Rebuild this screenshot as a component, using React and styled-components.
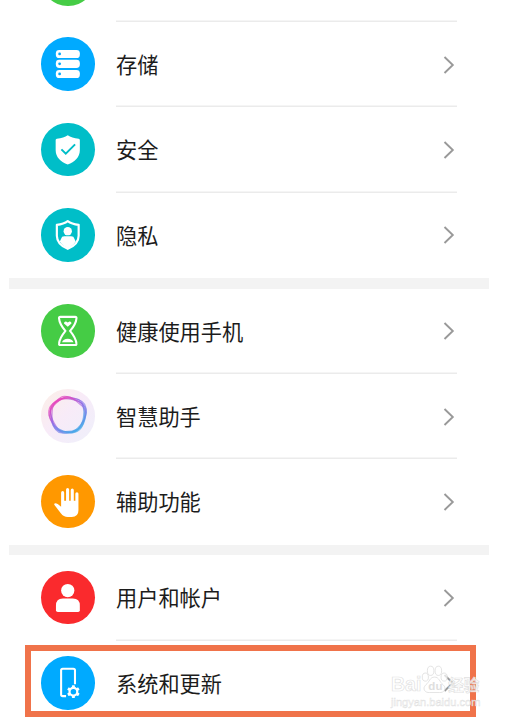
import styled, { createGlobalStyle } from "styled-components";

const GlobalStyle = createGlobalStyle`
    * {
        box-sizing: border-box;
    }
    body {
        margin: 0;
        background: #fff;
        font-family: "Noto Sans CJK SC", sans-serif;
    }
`;

const Screen = styled.main`
    position: relative;
    width: 510px;
    height: 720px;
    overflow: hidden;
    background: #fff;
`;

/* the list is scrolled, so the first row is mostly cut off */
const List = styled.div`
    width: 480px;
    margin: -63.3px 0 0 9px;
`;

const Group = styled.ul`
    list-style: none;
    margin: 0;
    padding: 0 32px;
    & + &::before {
        content: "";
        display: block;
        height: 10.67px;
        margin: 0 -32px;
        background: #f3f3f3;
    }
`;

const Row = styled.li`
    display: flex;
    align-items: center;
    gap: 21.5px;
    height: 85.33px;
`;

const Badge = styled.span`
    flex: none;
    width: 53.5px;
    height: 53.5px;
    margin-bottom: 1px;
    border-radius: 50%;
    background: ${({ $color }) => $color};
    svg {
        display: block;
        width: 100%;
        height: 100%;
    }
`;

const RowBody = styled.div`
    flex: 1;
    height: 100%;
    display: flex;
    align-items: center;
    justify-content: space-between;
    padding-right: 2px;
    box-shadow: ${({ $last }) => ($last ? "none" : "inset 0 -1.5px #ebebeb")};
`;

const Label = styled.span`
    font-size: 21.2px;
    line-height: 30px;
    color: #1c1c1c;
    padding-bottom: 1.6px;
`;

const Highlight = styled.div`
    position: absolute;
    left: 25px;
    top: 645px;
    width: 451px;
    height: 72px;
    border: 6px solid #f0734a;
`;

const Watermark = styled.div`
    position: absolute;
    left: 391px;
    top: 665px;
    width: 92px;
    color: rgba(255, 255, 255, 0.8);
    font-family: "Liberation Sans", "Noto Sans CJK SC", sans-serif;
    -webkit-text-stroke: 0.7px rgba(214, 214, 214, 0.75);
`;

const Brand = styled.div`
    display: flex;
    align-items: flex-end;
    height: 29px;
    font-size: 19.5px;
    line-height: 20px;
    font-weight: bold;
    white-space: nowrap;
`;

const Paw = styled.span`
    position: relative;
    flex: none;
    width: 27px;
    height: 29px;
    svg {
        position: absolute;
        left: 0;
        top: 0;
    }
    span {
        position: absolute;
        left: 7px;
        bottom: 0;
        font-size: 11.5px;
        line-height: 16px;
        color: #dedede;
        -webkit-text-stroke: 0;
    }
`;

const Jingyan = styled.span`
    font-size: 15.5px;
    line-height: 17px;
`;

const Site = styled.div`
    margin-top: 1px;
    font-size: 11.1px;
    line-height: 14px;
    white-space: nowrap;
    -webkit-text-stroke-width: 0.5px;
`;

const Icon = ({ children }) => (
    <svg viewBox="0 0 54 54" fill="none">
        {children}
    </svg>
);

const StorageIcon = () => (
    <Icon>
        {[13, 23, 33.2].map((y) => (
            <g key={y}>
                <rect x="15" y={y} width="24.2" height="8.2" rx="3.4" fill="#fff" />
                <circle cx="18.8" cy={y + 4.1} r="1.4" fill="#00aaff" />
            </g>
        ))}
    </Icon>
);

const SecurityIcon = () => (
    <Icon>
        <path d="M27 12.3Q31 15.2 38 15.8Q39.2 16 39.2 17.2V27.5C39.2 34.5 34 39.5 27 41.8C20 39.5 14.8 34.5 14.8 27.5V17.2Q14.8 16 16 15.8Q23 15.2 27 12.3Z" fill="#fff" />
        <path d="M20.6 26.6L25 31L34.4 21.6" stroke="#00bec8" strokeWidth="2" />
    </Icon>
);

const PrivacyIcon = () => (
    <Icon>
        <path d="M27 13.2Q31 16.2 38 17V28C38 34.5 33.5 38.5 27 41.2C20.5 38.5 16 34.5 16 28V17Q23 16.2 27 13.2Z" stroke="#fff" strokeWidth="2.2" strokeLinejoin="round" />
        <circle cx="27" cy="23.4" r="4.2" fill="#fff" />
        <path d="M19 33.8L20.3 31Q20.8 28.6 23.5 28.6H30.5Q33.2 28.6 33.7 31L35 33.8Q32.5 38 27 40.5Q21.5 38 19 33.8Z" fill="#fff" />
    </Icon>
);

const HourglassIcon = () => (
    <Icon>
        <path d="M19.5 13H34.5Q36 13 35.8 14.5C35.4 20 32.5 23.5 29.4 27.2C32.5 31 35.4 34.5 35.8 40Q36 41.4 34.5 41.4H19.5Q18 41.4 18.2 40C18.6 34.5 21.5 31 24.6 27.2C21.5 23.5 18.6 20 18.2 14.5Q18 13 19.5 13Z" stroke="#fff" strokeWidth="2.1" />
        <path d="M27 23L23.2 19.6Q23.2 17.5 25.3 17.7L27 18.6L28.7 17.7Q30.8 17.5 30.8 19.6Z" fill="#fff" />
        <path d="M21.2 38.6Q22.5 35.6 27 35.2Q31.5 35.6 32.8 38.6Z" fill="#fff" />
    </Icon>
);

const strands = [
    { angle: -14, scale: 1 },
    { angle: -5, scale: 0.94 },
    { angle: 0, scale: 1.05 },
    { angle: 6, scale: 0.98 },
    { angle: 14, scale: 1.01 },
    { angle: 24, scale: 0.95 },
];

const AssistantIcon = () => (
    <Icon>
        <defs>
            <linearGradient id="ring" x1="-13" y1="-13" x2="15" y2="15" gradientUnits="userSpaceOnUse">
                <stop offset="0" stopColor="#e83fb8" />
                <stop offset="0.45" stopColor="#8d6be8" />
                <stop offset="1" stopColor="#2fb0e8" />
            </linearGradient>
        </defs>
        {/* a rounded pentagon, turned and scaled a little for each strand */}
        {strands.map(({ angle, scale }) => (
            <path
                key={angle}
                d="M-6.5 -17.200C-3.500 -19.500 0.500 -17.500 5.500 -16.500C11.500 -15.300 16.500 -12.500 17.300 -7.500C18 -3.500 18 -0.500 16.500 4C15 9.500 13.500 13.500 9 15.500C4 17.700 -1 17.500 -5.500 17C-11 16.500 -13 12 -15.200 7C-17.500 2 -19.500 -2.500 -17.500 -7C-15.500 -11.500 -10.500 -14.500 -6.500 -17.200Z"
                transform={`translate(27 26.500) rotate(${angle}) scale(${scale})`}
                stroke="url(#ring)"
                strokeWidth="1.200"
                strokeOpacity="0.65"
            />
        ))}
    </Icon>
);

const HandIcon = () => (
    <Icon>
        <path d="M20.3 32V17.8A1.5 1.5 0 0 1 23.4 17.8V26H25.3V14.6A1.5 1.5 0 0 1 28.4 14.6V26H30V15.3A1.5 1.5 0 0 1 33.1 15.3V26H34.7V19A1.5 1.5 0 0 1 37.8 19V35.5Q37.8 42.3 31 42.3H27Q22.8 42.3 20 38.5L13.6 30.4Q12.8 28.8 14.6 28.5Q16.3 28.5 20.3 32Z" fill="#fff" />
    </Icon>
);

const UserIcon = () => (
    <Icon>
        <circle cx="27" cy="19.7" r="6.7" fill="#fff" />
        <path d="M15.1 39.5V35Q15.1 27.8 22 27.8H32.2Q39.2 27.8 39.2 35V39.5Q39.2 41.3 37.4 41.3H17Q15.1 41.3 15.1 39.5Z" fill="#fff" />
    </Icon>
);

const SystemIcon = () => (
    <Icon>
        <path d="M25.3 40.5H22Q20.3 40.5 20.3 38.8V14.5Q20.3 12.8 22 12.8H32.6Q34.3 12.8 34.3 14.5V28.5" stroke="#fff" strokeWidth="2.1" />
        <circle cx="32.7" cy="36" r="3.9" stroke="#fff" strokeWidth="2.2" />
        {[0, 60, 120, 180, 240, 300].map((angle) => (
            <rect key={angle} x="31.2" y="29.6" width="3" height="2.5" rx="0.5" fill="#fff" transform={`rotate(${angle} 32.7 36)`} />
        ))}
    </Icon>
);

const Chevron = () => (
    <svg width="12" height="18" viewBox="0 0 12 18" fill="none">
        <path d="M1.5 1L9.8 9L1.5 17" stroke="#999" strokeWidth="1.9" />
    </svg>
);

const groups = [
    [
        { id: "battery", text: "", color: "#45cc45", icon: null },
        { id: "storage", text: "存储", color: "#00aaff", icon: <StorageIcon /> },
        { id: "security", text: "安全", color: "#00bec8", icon: <SecurityIcon /> },
        { id: "privacy", text: "隐私", color: "#00bec8", icon: <PrivacyIcon /> },
    ],
    [
        { id: "balance", text: "健康使用手机", color: "#45cc45", icon: <HourglassIcon /> },
        { id: "assistant", text: "智慧助手", color: "linear-gradient(135deg, #fcefe6, #f8ebf8 45%, #eef0fb)", icon: <AssistantIcon /> },
        { id: "accessibility", text: "辅助功能", color: "#ff9800", icon: <HandIcon /> },
    ],
    [
        { id: "users", text: "用户和帐户", color: "#fa2a2d", icon: <UserIcon /> },
        { id: "system", text: "系统和更新", color: "#00aaff", icon: <SystemIcon /> },
    ],
];

const SettingsGroup = ({ items }) => (
    <Group>
        {items.map((item, index) => (
            <Row key={item.id}>
                <Badge $color={item.color}>{item.icon}</Badge>
                <RowBody $last={index === items.length - 1}>
                    <Label>{item.text}</Label>
                    <Chevron />
                </RowBody>
            </Row>
        ))}
    </Group>
);

export default function App() {
    return (
        <Screen>
            <GlobalStyle />
            <List>
                {groups.map((items) => (
                    <SettingsGroup key={items[0].id} items={items} />
                ))}
            </List>
            <Highlight />
            <Watermark>
                <Brand>
                    <span>Bai</span>
                    <Paw>
                        <svg width="27" height="29" viewBox="0 0 28 29" fill="rgba(255,255,255,0.7)" stroke="#dcdcdc" strokeWidth="0.8">
                            <ellipse cx="4.5" cy="12" rx="3.2" ry="4.2" />
                            <ellipse cx="10" cy="5.5" rx="3.4" ry="4.800" />
                            <ellipse cx="18" cy="5.5" rx="3.4" ry="4.800" />
                            <ellipse cx="24" cy="12" rx="3.2" ry="4.2" />
                            <path d="M14 12C19 12 19 17 23 20C27 24 24 28.5 19 28H9C4 28.5 1 24 5 20C9 17 9 12 14 12Z" />
                        </svg>
                        <span>du</span>
                    </Paw>
                    <Jingyan>经验</Jingyan>
                </Brand>
                <Site>jingyan.baidu.com</Site>
            </Watermark>
        </Screen>
    );
}
